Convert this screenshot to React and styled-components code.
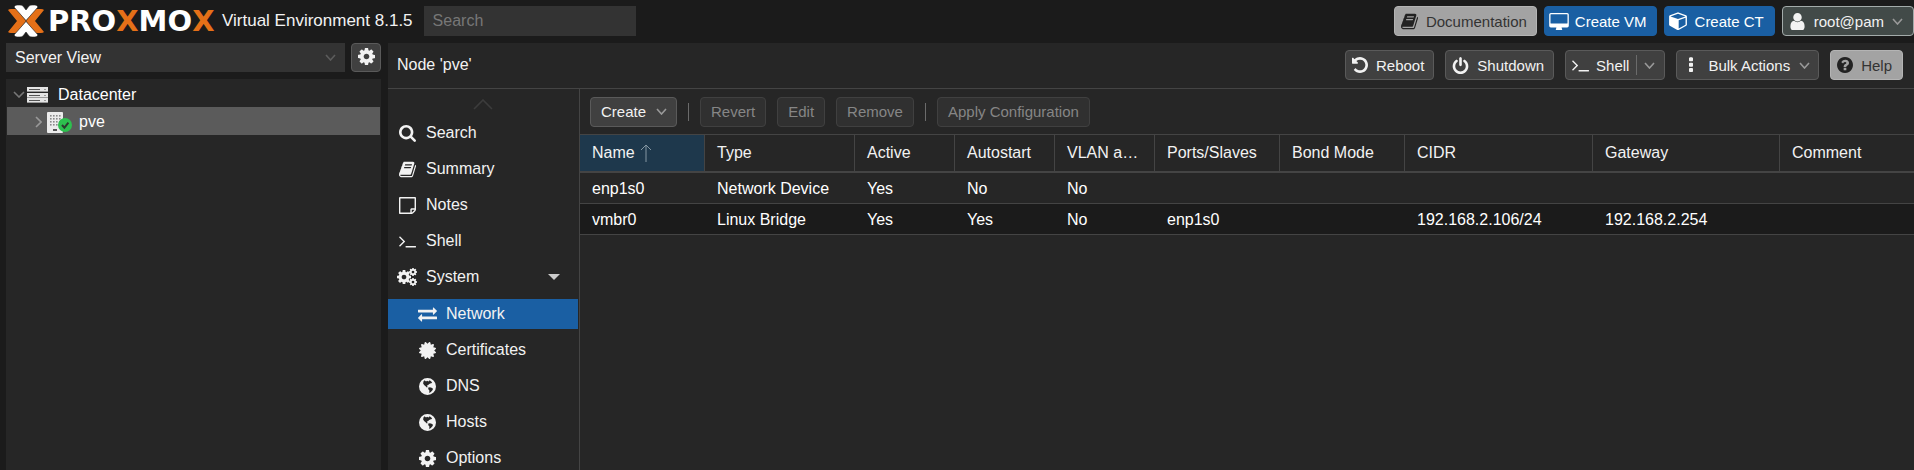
import React from 'react';
import styled, { createGlobalStyle, css } from 'styled-components';

const Global = createGlobalStyle`
  * { box-sizing: border-box; }
  html, body { margin: 0; background: #1b1b1b; }
  body, button, input, select, table {
    font-family: "Liberation Sans", Arial, Helvetica, sans-serif;
    font-size: 16px;
    color: #f2f2f2;
  }
  button, input, select { margin: 0; }
  ul { list-style: none; margin: 0; padding: 0; }
`;

const COG =
  'M1152 896q0-106-75-181t-181-75-181 75-75 181 75 181 181 75 181-75 75-181zm512-109v222q0 12-8 23t-20 13l-185 28q-19 54-39 91 35 50 107 138 10 12 10 25t-9 23q-27 37-99 108t-94 71q-12 0-26-9l-138-108q-44 23-91 38-16 136-29 186-7 28-36 28h-222q-14 0-24.5-8.5t-11.5-21.5l-28-184q-49-16-90-37l-141 107q-10 9-25 9-14 0-25-11-126-114-165-168-7-10-7-23 0-12 8-23 15-21 51-66.5t54-70.5q-27-50-41-99l-183-27q-13-2-21-12.5t-8-23.5v-222q0-12 8-23t19-13l186-28q14-46 39-92-40-57-107-138-10-12-10-24 0-10 9-23 26-36 98.5-107.5t94.5-71.5q13 0 26 10l138 107q44-23 91-38 16-136 29-186 7-28 36-28h222q14 0 24.5 8.5t11.5 21.5l28 184q49 16 90 37l142-107q9-9 24-9 13 0 25 10 129 119 165 170 7 8 7 22 0 12-8 23-15 21-51 66.5t-54 70.5q26 50 41 98l183 28q13 2 21 12.5t8 23.5z';

const ICONS = {
  cog: { box: '128 128 1536 1536', d: COG },
  search: {
    box: '64 128 1664 1664',
    d: 'M1216 832q0-185-131.5-316.5t-316.5-131.5-316.5 131.5-131.5 316.5 131.5 316.5 316.5 131.5 316.5-131.5 131.5-316.5zm512 832q0 52-38 90t-90 38q-54 0-90-38l-343-342q-179 124-399 124-143 0-273.5-55.5t-225-150-150-225-55.5-273.5 55.5-273.5 150-225 225-150 273.5-55.5 273.5 55.5 225 150 150 225 55.5 273.5q0 220-124 399l343 343q37 37 37 90z',
  },
  book: {
    box: '64 64 1664 1664',
    d: 'M1703 478q40 57 18 129l-275 906q-19 64-76.5 107.5t-122.5 43.5h-923q-77 0-148.5-53.5t-99.5-131.5q-24-67-2-127 0-4 3-27t4-37q1-8-3-21.5t-3-19.5q2-11 8-21t16.5-23.5 16.5-23.5q23-38 45-91.5t30-91.5q3-10 .5-30t-.5-28q3-11 17-28t17-23q21-36 42-92t25-90q1-9-2.5-32t.5-28q4-13 22-30.5t22-22.5q19-26 42.5-84.5t27.5-96.5q1-8-3-25.5t-2-26.5q2-8 9-18t18-23 17-21q8-12 16.5-30.5t15-35 16-36 19.5-32 26.5-23.5 36-11.5 47.5 5.5l-1 3q38-9 51-9h761q74 0 114 56t18 130l-274 906q-36 119-71.5 153.5t-128.5 34.5h-869q-27 0-38 15-11 16-1 43 24 70 144 70h923q29 0 56-15.5t35-41.5l300-987q7-22 5-57 38 15 59 43zm-1064 2q-4 13 2 22.5t20 9.5h608q13 0 25.5-9.5t16.5-22.5l21-64q4-13-2-22.5t-20-9.5h-608q-13 0-25.5 9.5t-16.5 22.5zm-83 256q-4 13 2 22.5t20 9.5h608q13 0 25.5-9.5t16.5-22.5l21-64q4-13-2-22.5t-20-9.5h-608q-13 0-25.5 9.5t-16.5 22.5z',
  },
  note: {
    box: '0 128 1536 1536',
    d: 'M1400 1280h-248v248q29-10 41-22l185-185q12-12 22-41zm-280-128h288v-896h-1280v1280h896v-288q0-40 28-68t68-28zm416-928v1024q0 40-20 88t-48 76l-184 184q-28 28-76 48t-88 20h-1024q-40 0-68-28t-28-68v-1344q0-40 28-68t68-28h1344q40 0 68 28t28 68z',
  },
  terminal: {
    box: '64 128 1664 1664',
    d: 'M649 983l-466 466q-10 10-23 10t-23-10l-50-50q-10-10-10-23t10-23l393-393-393-393q-10-10-10-23t10-23l50-50q10-10 23-10t23 10l466 466q10 10 10 23t-10 23zm1079 457v64q0 14-9 23t-23 9h-960q-14 0-23-9t-9-23v-64q0-14 9-23t23-9h960q14 0 23 9t9 23z',
  },
  exchange: {
    box: '0 64 1792 1792',
    d: 'M1792 1184v192q0 13-9.5 22.5t-22.5 9.5h-1376v192q0 13-9.5 22.5t-22.5 9.5q-12 0-24-10l-319-320q-9-9-9-22 0-14 9-23l320-320q9-9 23-9 13 0 22.5 9.5t9.5 22.5v192h1376q13 0 22.5 9.5t9.5 22.5zm0-544q0 14-9 23l-320 320q-9 9-23 9-13 0-22.5-9.5t-9.5-22.5v-192h-1376q-13 0-22.5-9.5t-9.5-22.5v-192q0-13 9.5-22.5t22.5-9.5h1376v-192q0-14 9-23t23-9q12 0 24 10l319 319q9 9 9 23z',
  },
  certificate: {
    box: '128 128 1536 1536',
    d: 'M1504 896l138 135q30 28 20 70-12 41-52 51l-188 48 53 186q12 41-19 70-29 31-70 19l-186-53-48 188q-10 40-51 52-12 2-19 2-31 0-51-22l-135-138-135 138q-28 30-70 20-41-11-51-52l-48-188-186 53q-41 12-70-19-31-29-19-70l53-186-188-48q-40-10-52-51-10-42 20-70l138-135-138-135q-30-28-20-70 12-41 52-51l188-48-53-186q-12-41 19-70 29-31 70-19l186 53 48-188q10-41 51-51 41-12 70 19l135 139 135-139q29-30 70-19 41 10 51 51l48 188 186-53q41-12 70 19 31 29 19 70l-53 186 188 48q40 10 52 51 10 42-20 70z',
  },
  undo: {
    box: '128 128 1536 1536',
    d: 'M1664 896q0 156-61 298t-164 245-245 164-298 61q-172 0-327-72.5t-264-204.5q-7-10-6.5-22.5t8.5-20.5l137-138q10-9 25-9 16 2 23 12 73 95 179 147t225 52q104 0 198.5-40.5t163.5-109.5 109.5-163.5 40.5-198.5-40.5-198.5-109.5-163.5-163.5-109.5-198.5-40.5q-98 0-188 35.5t-160 101.5l137 138q31 30 14 69-17 40-59 40h-448q-26 0-45-19t-19-45v-448q0-42 40-59 39-17 69 14l130 129q107-101 244.5-156.5t284.5-55.5q156 0 298 61t245 164 164 245 61 298z',
  },
  power: {
    box: '64 0 1664 1664',
    d: 'M1664 896q0 156-61 298t-164 245-245 164-298 61-298-61-245-164-164-245-61-298q0-182 80.5-343t226.5-270q43-32 95.5-25t83.5 50q32 42 24.5 94.5t-49.5 84.5q-98 74-151.5 181t-53.5 228q0 104 40.5 198.5t109.5 163.5 163.5 109.5 198.5 40.5 198.5-40.5 163.5-109.5 109.5-163.5 40.5-198.5q0-121-53.5-228t-151.5-181q-42-32-49.5-84.5t24.5-94.5q31-43 84-50t95 25q146 109 226.5 270t80.5 343zm-640-768v640q0 52-38 90t-90 38-90-38-38-90v-640q0-52 38-90t90-38 90 38 38 90z',
  },
  user: {
    box: '128 128 1536 1536',
    d: 'M1536 1399q0 109-62.5 187t-150.5 78h-854q-88 0-150.5-78t-62.5-187q0-85 8.5-160.5t31.5-152 58.5-131 94-89 134.5-34.5q131 128 313 128t313-128q76 0 134.5 34.5t94 89 58.5 131 31.5 152 8.5 160.5zm-256-887q0 159-112.5 271.5t-271.5 112.5-271.5-112.5-112.5-271.5 112.5-271.5 271.5-112.5 271.5 112.5 112.5 271.5z',
  },
  cube: {
    box: '0 100 1664 1680',
    d: 'M896 1629l640-349v-636l-640 233v752zm-64-865l698-254-698-254-698 254zm832-252v768q0 35-18 65t-49 47l-704 384q-28 16-61 16t-61-16l-704-384q-31-17-49-47t-18-65v-768q0-40 23-73t61-47l704-256q22-8 44-8t44 8l704 256q38 14 61 47t23 73z',
  },
  desktop: {
    box: '0 0 1920 1664',
    d: 'M1792 992v-832q0-13-9.5-22.5t-22.5-9.5h-1600q-13 0-22.5 9.5t-9.5 22.5v832q0 13 9.5 22.5t22.5 9.5h1600q13 0 22.5-9.5t9.5-22.5zm128-832v1088q0 66-47 113t-113 47h-544q0 37 16 77.5t32 71 16 43.5q0 26-19 45t-45 19h-512q-26 0-45-19t-19-45q0-14 16-44t32-70 16-78h-544q-66 0-113-47t-47-113v-1088q0-66 47-113t113-47h1600q66 0 113 47t47 113z',
  },
  dots: {
    box: '128 96 1536 1536',
    d: 'M1088 1248v192q0 40-28 68t-68 28h-192q-40 0-68-28t-28-68v-192q0-40 28-68t68-28h192q40 0 68 28t28 68zm0-512v192q0 40-28 68t-68 28h-192q-40 0-68-28t-28-68v-192q0-40 28-68t68-28h192q40 0 68 28t28 68zm0-512v192q0 40-28 68t-68 28h-192q-40 0-68-28t-28-68v-192q0-40 28-68t68-28h192q40 0 68 28t28 68z',
  },
  question: {
    box: '128 128 1536 1536',
    d: 'M1024 1376v-192q0-14-9-23t-23-9h-192q-14 0-23 9t-9 23v192q0 14 9 23t23 9h192q14 0 23-9t9-23zm256-672q0-88-55.5-163t-138.5-116-170-41q-243 0-371 213-15 24 8 42l132 100q7 6 19 6 16 0 25-12 53-68 86-92 34-24 86-24 48 0 85.5 26t37.5 59q0 38-20 61t-68 45q-63 28-115.5 86.5t-52.5 125.5v36q0 14 9 23t23 9h192q14 0 23-9t9-23q0-19 21.5-49.5t54.5-49.5q32-18 49-28.5t46-35 44.5-48 28-60.5 12.5-81zm384 192q0 209-103 385.5t-279.5 279.5-385.5 103-385.5-103-279.5-279.5-103-385.5 103-385.5 279.5-279.5 385.5-103 385.5 103 279.5 279.5 103 385.5z',
  },
  globe: {
    box: '0 0 16 16',
    d: 'M8 0a8 8 0 1 1 0 16a8 8 0 1 1 0-16zM5.2 2.2L4.2 3.4 3.9 5.2 4.8 6.6 6.2 7.8 7.4 9 8.2 8.4 7.4 7.4 8.6 6.6 9.6 5.6 11.2 5 12.4 4.6 11.6 3.2 10 2.2 9 3.2 7.6 2.6 6.6 3.4zM9 8.8L8.6 10.4 9.8 11.8 9.6 14 11.2 13.2 12.8 11.4 13.2 10 11.4 9z',
  },
};

const Svg = styled.svg`
  display: block;
  flex: none;
  fill: currentColor;
`;

const Icon = ({ name, size = 17, width }) => (
  <Svg viewBox={ICONS[name].box} width={width || size} height={size} aria-hidden="true">
    <path fillRule="evenodd" d={ICONS[name].d} />
  </Svg>
);

const CogsIcon = () => (
  <Svg viewBox="0 0 20 18" width="20" height="18" aria-hidden="true">
    <svg x="0" y="2" width="14" height="14" viewBox="128 128 1536 1536"><path d={COG} /></svg>
    <svg x="12" y="0" width="8" height="8" viewBox="128 128 1536 1536"><path d={COG} /></svg>
    <svg x="12" y="10" width="8" height="8" viewBox="128 128 1536 1536"><path d={COG} /></svg>
  </Svg>
);

const ServerIcon = () => (
  <Svg viewBox="0 0 21 16" width="21" height="16" aria-hidden="true">
    {[0, 6, 11].map((y) => (
      <g key={y}>
        <rect x="0" y={y} width="21" height="4.6" fill="#e4e4e4" />
        <rect x="2" y={y + 2} width="11" height="1" fill="#555" />
        <rect x="17" y={y + 2} width="2" height="1" fill="#999" />
      </g>
    ))}
  </Svg>
);

const NodeIcon = () => (
  <Svg viewBox="0 0 25 21" width="25" height="21" aria-hidden="true">
    <path fill="#ececec" d="M1 0h14q1 0 1 1v19q0 1-1 1H1q-1 0-1-1V1q0-1 1-1z" />
    {[3, 6, 9, 12].map((y) =>
      [3, 6, 9, 12].map((x) => <rect key={`${x}-${y}`} x={x} y={y} width="1.6" height="1.6" fill="#8a8a8a" />)
    )}
    <path fill="#555" d="M6 17h4v2H6z" />
    <circle cx="18" cy="13" r="7" fill="#2dc04e" />
    <path d="M15 13l2.4 2.6 4-5" fill="none" stroke="#2b3a2e" strokeWidth="2" />
  </Svg>
);

const Chevron = ({ w = 11, h = 7, color = '#999', points = '1,1 5.5,6 10,1' }) => (
  <Svg viewBox={`0 0 ${w} ${h}`} width={w} height={h} aria-hidden="true">
    <polyline points={points} fill="none" stroke={color} strokeWidth="1.6" />
  </Svg>
);

const Page = styled.div`
  height: 100vh;
  display: flex;
  flex-direction: column;
  overflow: hidden;
  background: #1b1b1b;
`;

const Header = styled.header`
  display: flex;
  align-items: center;
  height: 43px;
  padding: 0 0 1px 8px;
  flex: none;
`;

const Wordmark = styled.span`
  margin-left: 4px;
  width: 170px;
  font: bold 29px/32px "DejaVu Sans", sans-serif;
  color: #fff;
  b { color: #e57018; }
`;

const Product = styled.span`
  margin-left: 4px;
  font-size: 17px;
  white-space: nowrap;
`;

const SearchBox = styled.input`
  margin-left: 11px;
  width: 212px;
  height: 30px;
  padding: 0 9px;
  border: 0;
  background: #333;
  outline: 0;
  &::placeholder { color: #777; opacity: 1; }
`;

const HeaderActions = styled.div`
  display: flex;
  gap: 7px;
  margin-left: auto;
`;

const tones = {
  normal: css`background: #404040; border-color: #5a5a5a; color: #f2f2f2;`,
  primary: css`background: #1a5fa3; border-color: #1a5fa3; color: #fff;`,
  light: css`background: #a3a3a3; border-color: #b4b4b4; color: #333;`,
  user: css`background: #424a48; border-color: #a3abaa; color: #f2f2f2;`,
};

const Button = styled.button`
  display: flex;
  align-items: center;
  gap: ${(p) => p.$gap || 8}px;
  height: 30px;
  padding: 0 ${(p) => p.$pad || 9}px 0 ${(p) => p.$left || 6}px;
  border: 1px solid;
  border-radius: 4px;
  font-size: 15px;
  white-space: nowrap;
  flex: none;
  ${(p) => tones[p.$tone || 'normal']}
  &:disabled { background: #303030; border-color: #404040; color: #868686; }
`;

const IconTint = styled.span`
  color: #222;
`;

const Body = styled.div`
  flex: 1;
  min-height: 0;
  display: flex;
  gap: 7px;
  padding-left: 6px;
`;

const Sidebar = styled.aside`
  width: 375px;
  flex: none;
  display: flex;
  flex-direction: column;
  gap: 7px;
`;

const ViewBar = styled.div`
  display: flex;
  gap: 6px;
`;

const SelectWrap = styled.label`
  flex: 1;
  display: flex;
  align-items: center;
  height: 29px;
  padding-right: 9px;
  background: #333;
`;

const ViewSelect = styled.select`
  flex: 1;
  height: 29px;
  padding: 0 9px;
  border: 0;
  background: transparent;
  appearance: none;
  outline: 0;
`;

const GearButton = styled(Button)`
  width: 30px;
  height: 29px;
  padding: 0 0 2px;
  justify-content: center;
`;

const Tree = styled.ul`
  flex: 1;
  padding: 1px;
  background: #262626;
`;

const TreeRow = styled.li`
  display: flex;
  align-items: center;
  height: ${(p) => (p.$selected ? 28 : 27)}px;
  padding-top: 2px;
  padding-left: ${(p) => (p.$depth ? 28 : 6)}px;
  background: ${(p) => (p.$selected ? '#5b5b5b' : 'transparent')};
  gap: ${(p) => (p.$depth ? 5 : 2)}px;
  color: #fff;
`;

const TreeLabel = styled.span`
  margin-left: ${(p) => (p.$depth ? 2 : 8)}px;
`;

const Main = styled.main`
  flex: 1;
  min-width: 0;
  display: flex;
  flex-direction: column;
  background: #262626;
`;

const TitleBar = styled.div`
  display: flex;
  align-items: center;
  gap: 11px;
  height: 46px;
  padding: 0 11px 1px 9px;
  border-bottom: 1px solid #444;
  flex: none;
`;

const Title = styled.h1`
  margin: 0 auto 0 0;
  font-size: 16px;
  font-weight: normal;
`;

const Split = styled.span`
  width: 1px;
  height: 20px;
  background: #6b6b6b;
`;

const Content = styled.div`
  flex: 1;
  min-height: 0;
  display: flex;
`;

const Nav = styled.nav`
  width: 192px;
  flex: none;
  overflow: hidden;
  border-right: 1px solid #444;
  padding-right: 1px;
`;

const ScrollUp = styled.div`
  display: flex;
  justify-content: center;
  padding: 10px 0 8px;
`;

const SubList = styled.ul`
  padding-top: 1px;
`;

const NavLink = styled.a`
  display: flex;
  align-items: center;
  height: 30px;
  margin-bottom: 6px;
  padding-left: ${(p) => (p.$sub ? 29 : 9)}px;
  padding-right: 18px;
  background: ${(p) => (p.$active ? '#1a5fa3' : 'transparent')};
  color: #f2f2f2;
  text-decoration: none;
`;

const NavIcon = styled.span`
  display: flex;
  justify-content: center;
  width: 20px;
  margin-right: 9px;
`;

const Expander = styled.span`
  margin-left: auto;
  border: 6px solid transparent;
  border-top-color: #ccc;
  border-bottom: 0;
`;

const Panel = styled.section`
  flex: 1;
  min-width: 0;
`;

const Toolbar = styled.div`
  display: flex;
  align-items: center;
  gap: 11px;
  height: 45px;
  padding: 0 10px;
`;

const Divider = styled.span`
  width: 1px;
  height: 18px;
  background: #6b6b6b;
`;

const Grid = styled.table`
  width: 100%;
  table-layout: fixed;
  border-collapse: separate;
  border-spacing: 0;
  th, td {
    padding: 0 12px;
    text-align: left;
    font-weight: normal;
    white-space: nowrap;
    overflow: hidden;
    text-overflow: ellipsis;
  }
`;

const HeadCell = styled.th`
  height: 39px;
  border-top: 1px solid #444;
  border-bottom: 2px solid #444;
  border-right: ${(p) => (p.$last ? 0 : 1)}px solid #444;
  background: ${(p) => (p.$sorted ? '#1e384c' : 'transparent')};
`;

const HeadLabel = styled.span`
  display: ${(p) => (p.$sorted ? 'flex' : 'inline')};
  align-items: center;
  gap: 5px;
`;

const Row = styled.tr`
  background: ${(p) => (p.$alt ? '#1b1b1b' : '#262626')};
  color: #fff;
  td { height: 31px; padding-top: 2px; border-bottom: 1px solid #444; }
`;

const COLUMNS = [
  ['Name', 125], ['Type', 150], ['Active', 100], ['Autostart', 100], ['VLAN aware', 100],
  ['Ports/Slaves', 125], ['Bond Mode', 125], ['CIDR', 188], ['Gateway', 187], ['Comment', null],
];

const ROWS = [
  ['enp1s0', 'Network Device', 'Yes', 'No', 'No', '', '', '', '', ''],
  ['vmbr0', 'Linux Bridge', 'Yes', 'Yes', 'No', 'enp1s0', '', '192.168.2.106/24', '192.168.2.254', ''],
];

const NAV = [['search', 'Search'], ['book', 'Summary'], ['note', 'Notes'], ['terminal', 'Shell']];
const SUBNAV = [
  ['exchange', 'Network'], ['certificate', 'Certificates'], ['globe', 'DNS'], ['globe', 'Hosts'], ['cog', 'Options'],
];

const LogoMark = () => (
  <Svg viewBox="0 0 36 32" width="36" height="32" aria-hidden="true">
    <path fill="#e57018" d="M0 5q1-1 3-1h4q2 0 3 1l8 11-8 11q-1 1-3 1H3q-2 0-3-1l9-11zM36 5q-1-1-3-1h-4q-2 0-3 1l-8 11 8 11q1 1 3 1h4q2 0 3-1l-9-11z" />
    <path
      fill="#fff"
      stroke="#1b1b1b"
      strokeWidth="0.6"
      d="M6 2q1-2 3-2h3q2 0 3 1l3 4 3-4q1-1 3-1h3q2 0 3 2L18 15.6zM6 30q1 2 3 2h3q2 0 3-1l3-4 3 4q1 1 3 1h3q2 0 3-2L18 16.4z"
    />
  </Svg>
);

export default function App() {
  return (
    <Page>
      <Global />
      <Header>
        <LogoMark />
        <Wordmark>PRO<b>X</b>MO<b>X</b></Wordmark>
        <Product>Virtual Environment 8.1.5</Product>
        <SearchBox type="text" placeholder="Search" aria-label="Search" />
        <HeaderActions>
          <Button $tone="light"><IconTint><Icon name="book" /></IconTint>Documentation</Button>
          <Button $tone="primary" $left={4} $gap={6}><Icon name="desktop" size={17} width={20} />Create VM</Button>
          <Button $tone="primary" $left={4} $pad={10}><Icon name="cube" size={18} />Create CT</Button>
          <Button $tone="user" $pad={10}>
            <Icon name="user" />root@pam<Chevron />
          </Button>
        </HeaderActions>
      </Header>
      <Body>
        <Sidebar>
          <ViewBar>
            <SelectWrap>
              <ViewSelect aria-label="View"><option>Server View</option></ViewSelect>
              <Chevron color="#5c5c5c" />
            </SelectWrap>
            <GearButton aria-label="Settings"><Icon name="cog" /></GearButton>
          </ViewBar>
          <Tree>
            <TreeRow>
              <Chevron w={12} color="#777" points="1,1 6,6 11,1" />
              <ServerIcon />
              <TreeLabel>Datacenter</TreeLabel>
            </TreeRow>
            <TreeRow $depth $selected>
              <Chevron w={7} h={12} color="#999" points="1,1 6,6 1,11" />
              <NodeIcon />
              <TreeLabel $depth>pve</TreeLabel>
            </TreeRow>
          </Tree>
        </Sidebar>
        <Main>
          <TitleBar>
            <Title>Node 'pve'</Title>
            <Button><Icon name="undo" size={16} />Reboot</Button>
            <Button><Icon name="power" />Shutdown</Button>
            <Button $gap={7}><Icon name="terminal" />Shell<Split /><Chevron /></Button>
            <Button $gap={9} $pad={8}><Icon name="dots" size={16} />Bulk Actions<Chevron /></Button>
            <Button $tone="light" $pad={10}><IconTint><Icon name="question" size={16} /></IconTint>Help</Button>
          </TitleBar>
          <Content>
            <Nav>
              <ScrollUp><Chevron w={20} h={11} color="#3c3c3c" points="1,10 10,1 19,10" /></ScrollUp>
              <ul>
                {NAV.map(([icon, label]) => (
                  <li key={label}>
                    <NavLink href="#"><NavIcon><Icon name={icon} /></NavIcon>{label}</NavLink>
                  </li>
                ))}
                <li>
                  <NavLink href="#"><NavIcon><CogsIcon /></NavIcon>System<Expander /></NavLink>
                  <SubList>
                    {SUBNAV.map(([icon, label], i) => (
                      <li key={label}>
                        <NavLink href="#" $sub $active={i === 0}>
                          <NavIcon><Icon name={icon} size={icon === 'exchange' ? 19 : 17} /></NavIcon>{label}
                        </NavLink>
                      </li>
                    ))}
                  </SubList>
                </li>
              </ul>
            </Nav>
            <Panel>
              <Toolbar>
                <Button $left={10} $gap={10}>Create<Chevron /></Button>
                <Divider />
                <Button $left={10} $pad={10} disabled>Revert</Button>
                <Button $left={10} $pad={10} disabled>Edit</Button>
                <Button $left={10} $pad={10} disabled>Remove</Button>
                <Divider />
                <Button $left={10} $pad={10} disabled>Apply Configuration</Button>
              </Toolbar>
              <Grid>
                <colgroup>
                  {COLUMNS.map(([label, width]) => <col key={label} width={width || undefined} />)}
                </colgroup>
                <thead>
                  <tr>
                    {COLUMNS.map(([label], i) => (
                      <HeadCell key={label} scope="col" $sorted={i === 0} $last={i === COLUMNS.length - 1}>
                        <HeadLabel $sorted={i === 0}>
                          {label}
                          {i === 0 && (
                            <Svg viewBox="0 0 12 18" width="12" height="18" aria-hidden="true">
                              <path d="M6 18V1M1 6l5-5 5 5" fill="none" stroke="#8496a2" />
                            </Svg>
                          )}
                        </HeadLabel>
                      </HeadCell>
                    ))}
                  </tr>
                </thead>
                <tbody>
                  {ROWS.map((cells, r) => (
                    <Row key={cells[0]} $alt={r % 2 === 1}>
                      {cells.map((cell, c) => <td key={COLUMNS[c][0]}>{cell}</td>)}
                    </Row>
                  ))}
                </tbody>
              </Grid>
            </Panel>
          </Content>
        </Main>
      </Body>
    </Page>
  );
}
